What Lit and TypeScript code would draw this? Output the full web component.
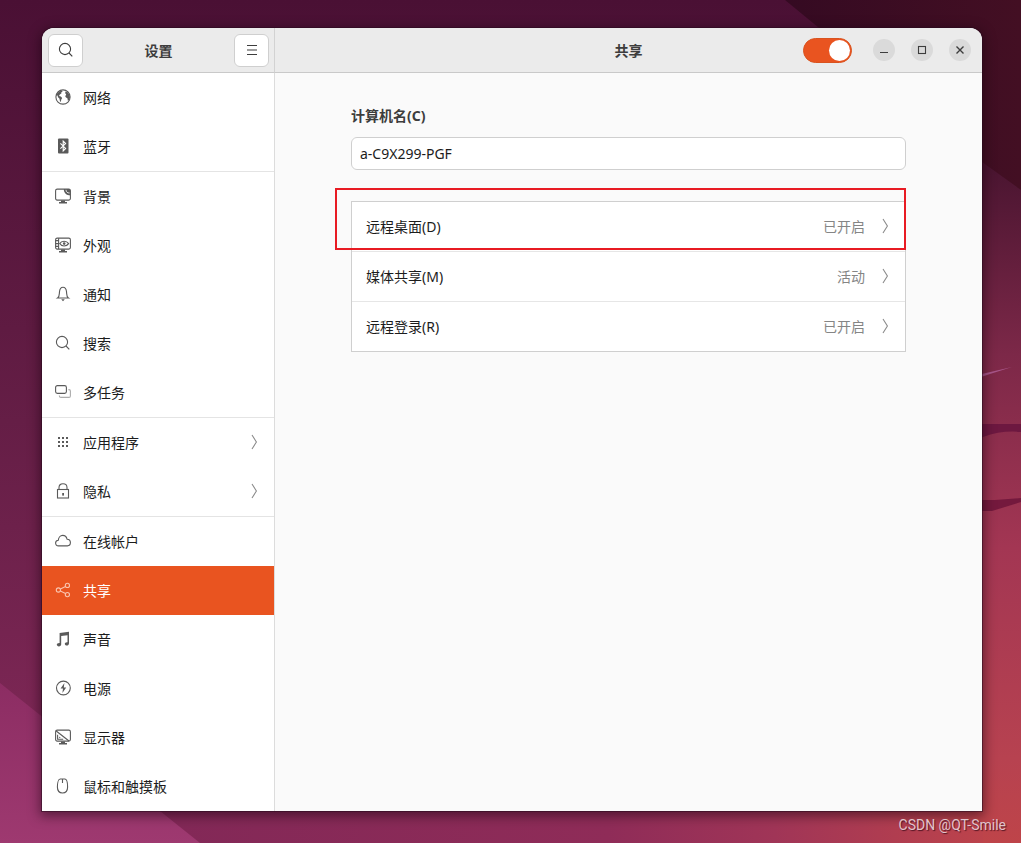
import { LitElement, html, css, svg, TemplateResult } from "lit";
import { customElement, property, state } from "lit/decorators.js";
import { classMap } from "lit/directives/class-map.js";

const ICONS: Record<string, TemplateResult> = {
  network: svg`<circle cx="8" cy="8" r="7.1" class="line"/><path class="solid" d="M4.2 2.4 6.8 1.4 7.6 2.4 6.2 3.6 6.4 4.6 4.8 5.6 4 7 5.8 7.6 7.2 9 6.2 10.8 5.8 13 5 12.2 4.4 9.6 3 8.2 2.6 6.4 1.2 6.6 2 4.4zM10.4 2.4 12.4 3 14.4 5.4 15 8.4 14 11.2 12.9 11.8 12.4 9.2 11 8.6 10.2 7.2 11.2 5.4 10.2 4.2z"/>`,
  bluetooth: svg`<rect x="3" y="0.5" width="10.5" height="15" rx="1" class="solid"/><path class="knock" d="M5.4 5.4 10.6 10.4 8.2 12.8V3.2L10.6 5.6 5.4 10.6"/>`,
  background: svg`<rect x="0.6" y="1.1" width="14.8" height="11" rx="1.6" class="line"/><path class="solid" d="M8.8 1H14.5L15.5 2.5V7.4C11.5 7.4 8.8 5 8.8 1zM6 12.4H10V14H12V15.4H4V14H6z"/><path class="glint" d="M11 1.8C11 4 12.4 5 14.6 5"/>`,
  appearance: svg`<rect x="0.6" y="1.1" width="14.8" height="11" rx="1.6" class="line"/><path class="line" d="M3.6 1.2V12M0.6 3.6H3.6M0.6 6.6H3.6M0.6 9.4H3.6M4.8 6.6C6.4 3.4 11.6 3.4 13.6 6.6 11.6 9.8 6.4 9.8 4.8 6.6z"/><circle cx="9.2" cy="6.6" r="1.3" class="solid"/><path class="solid" d="M6 12.4H10V14H12V15.4H4V14H6z"/>`,
  bell: svg`<path class="line" d="M2.6 12C4.6 10.8 4.2 8.4 4.5 5.6 4.8 2.8 6.2 1.3 8 1.3S11.2 2.8 11.5 5.6C11.8 8.4 11.4 10.8 13.4 12z"/><path class="solid" d="M6.2 13.2H9.8L8 15.2z"/>`,
  search: svg`<circle cx="7" cy="7" r="5.6" class="line"/><path class="line" d="M11 11 14.3 14.3"/>`,
  multitask: svg`<rect x="0.6" y="1.6" width="10.8" height="7.8" rx="1.8" class="line"/><path class="line faint" d="M13.4 5.6H14C15 5.6 15.4 6.2 15.4 7V12C15.4 13 14.8 13.4 14 13.4H6C5 13.4 4.4 13 4.4 12V11.4"/>`,
  apps: svg`<path class="solid" d="M3 3h2v2H3zM7 3h2v2H7zM11 3h2v2H11zM3 7h2v2H3zM7 7h2v2H7zM11 7h2v2H11zM3 11h2v2H3zM7 11h2v2H7zM11 11h2v2H11z"/>`,
  lock: svg`<rect x="2.5" y="6.5" width="11" height="8.5" class="line"/><path class="line" d="M4 6.4V4.6C4 2.2 5.6.8 8 .8S12 2.2 12 4.6V6.4"/><rect x="7.2" y="10" width="1.8" height="2.6" class="solid"/>`,
  cloud: svg`<path class="line" d="M3.5 12.9C1.6 12.9.6 11.6.6 10.1.6 8.6 1.7 7.4 3.3 7.2 3.5 4.6 5.3 2.4 7.7 2.4 9.8 2.4 11.5 3.9 12.1 6.2 14.2 6.3 15.4 7.8 15.4 9.6 15.4 11.5 14.2 12.9 12.4 12.9z"/>`,
  share: svg`<circle cx="3.4" cy="8" r="2.1" class="line"/><circle cx="12.4" cy="3.4" r="2.1" class="line"/><circle cx="12.4" cy="12.6" r="2.1" class="line"/><path class="line" d="M5.4 7 10.5 4.4M5.4 9 10.5 11.6"/>`,
  music: svg`<path class="solid" d="M4.6 1.9 14 .8V12.3C14 13.8 12.9 14.6 11.8 14.6S9.8 13.8 9.8 12.8 10.8 11 12.5 11.2V4.2L6.2 5V13.2C6.2 14.6 5.1 15.4 3.9 15.4S1.8 14.6 1.8 13.6 3 11.8 4.6 12z"/>`,
  power: svg`<circle cx="8.4" cy="8" r="6.9" class="line"/><path class="solid" d="M9.4 3 5.6 8.6H8L7.4 13 11.2 7.4H8.8z"/>`,
  display: svg`<rect x="0.6" y="1.1" width="14.8" height="11" rx="1.6" class="line"/><path class="line" d="M1.2 2 14 12M2.6 5.8V10.2H8.2"/><path class="solid" d="M4.2 7.4 5.8 9H4.2zM6 12.4H10V14H12V15.4H4V14H6z"/>`,
  mouse: svg`<path class="line" d="M5.2 1H9.8C11.8 1 12.6 5.8 12.6 9 12.6 12.6 10.6 15 7.5 15S2.4 12.6 2.4 9C2.4 5.8 3.2 1 5.2 1zM7.5 1.2V5"/>`,
  menu: svg`<path class="line" d="M3 3.5H13M3 8H13M3 12.5H13"/>`,
  minimize: svg`<path class="line" d="M4 10.5H12"/>`,
  maximize: svg`<rect x="4.5" y="4.5" width="7" height="7" class="line"/>`,
  close: svg`<path class="line bold" d="M4.5 4.5 11.5 11.5M11.5 4.5 4.5 11.5"/>`,
  chevron: svg`<path class="line" d="M6 1 10.4 8 6 15"/>`,
};

@customElement("ui-icon")
export class UiIcon extends LitElement {
  @property() name = "";

  static styles = css`
    :host { display: block; flex: none; width: 16px; height: 16px; }
    .glyph { display: block; width: 100%; height: 100%; }
    .line { fill: none; stroke: currentColor; stroke-width: 1.1; }
    .bold { stroke-width: 1.4; }
    .faint { opacity: 0.5; }
    .solid { fill: currentColor; }
    .knock { fill: none; stroke: #fff; stroke-width: 1.1; }
    .glint { fill: none; stroke: #fff; stroke-width: 0.8; }
  `;

  render() {
    return html`<svg class="glyph" viewBox="0 0 16 16" aria-hidden="true">${ICONS[this.name]}</svg>`;
  }
}

@customElement("desktop-wallpaper")
export class DesktopWallpaper extends LitElement {
  static styles = css`
    :host { display: block; }
    .art { display: block; width: 100%; height: 100%; }
  `;

  render() {
    return html`<svg class="art" viewBox="0 0 1021 843" preserveAspectRatio="none" aria-hidden="true">
      <defs>
        <linearGradient id="left" x1="0" y1="0" x2="0" y2="1">
          <stop offset="0" stop-color="#4a1034"/><stop offset="0.5" stop-color="#651e46"/><stop offset="1" stop-color="#852a5a"/>
        </linearGradient>
        <linearGradient id="right" x1="0" y1="0" x2="0" y2="1">
          <stop offset="0" stop-color="#45122f"/><stop offset="0.2" stop-color="#4b1531"/><stop offset="0.42" stop-color="#7c2848"/>
          <stop offset="0.65" stop-color="#a33653"/><stop offset="0.9" stop-color="#b74250"/><stop offset="1" stop-color="#be4449"/>
        </linearGradient>
        <linearGradient id="foot" x1="0" y1="0" x2="1" y2="0">
          <stop offset="0" stop-color="#822857"/><stop offset="0.55" stop-color="#8f2c58"/><stop offset="0.75" stop-color="#a03557"/><stop offset="1" stop-color="#bc434b"/>
        </linearGradient>
        <linearGradient id="fold" x1="0" y1="0" x2="0" y2="1">
          <stop offset="0" stop-color="#8c2d63"/><stop offset="1" stop-color="#9e3970"/>
        </linearGradient>
        <linearGradient id="corner" x1="0" y1="0" x2="1" y2="0">
          <stop offset="0" stop-color="#350a22"/><stop offset="1" stop-color="#430f23"/>
        </linearGradient>
      </defs>
      <rect width="1021" height="843" fill="url(#left)"/>
      <rect x="900" width="121" height="843" fill="url(#right)"/>
      <rect x="150" y="790" width="833" height="53" fill="url(#foot)"/>
      <path d="M785 0H1021V190L982 162z" fill="url(#corner)"/>
      <path d="M0 683 200 843H0z" fill="url(#fold)"/>
      <path d="M960 379 1012 367 990 374 960 384z" fill="#a8568a"/>
      <path d="M960 424H1021V432Q1002 430 983 437L960 443z" fill="#6d1840"/>
      <path d="M960 500H995L1021 498V502L992 511H960z" fill="#74193d"/>
    </svg>`;
  }
}

interface Panel { icon: string; label: string; sub?: boolean; }

const GROUPS: Panel[][] = [
  [{ icon: "network", label: "网络" }, { icon: "bluetooth", label: "蓝牙" }],
  [
    { icon: "background", label: "背景" },
    { icon: "appearance", label: "外观" },
    { icon: "bell", label: "通知" },
    { icon: "search", label: "搜索" },
    { icon: "multitask", label: "多任务" },
  ],
  [{ icon: "apps", label: "应用程序", sub: true }, { icon: "lock", label: "隐私", sub: true }],
  [
    { icon: "cloud", label: "在线帐户" },
    { icon: "share", label: "共享" },
    { icon: "music", label: "声音" },
    { icon: "power", label: "电源" },
    { icon: "display", label: "显示器" },
    { icon: "mouse", label: "鼠标和触摸板" },
  ],
];

const SERVICES = [
  { label: "远程桌面(D)", status: "已开启", marked: true },
  { label: "媒体共享(M)", status: "活动", marked: false },
  { label: "远程登录(R)", status: "已开启", marked: false },
];

@customElement("app-root")
export class AppRoot extends LitElement {
  @state() private selected = "共享";
  @state() private sharing = true;

  static styles = css`
    :host {
      display: block;
      font-family: "Noto Sans", "Noto Sans CJK SC", sans-serif;
      font-size: 14px;
      line-height: 20px;
      color: #1c1c1c;
    }
    * { box-sizing: border-box; }
    button, input { font: inherit; color: inherit; margin: 0; }
    button { padding: 0; border: 0; background: none; text-align: left; }
    .desktop {
      position: relative;
      isolation: isolate;
      display: flex;
      flex-direction: column;
      min-height: 100vh;
      padding: 28px 39px 0 42px;
    }
    .wallpaper { position: absolute; inset: 0; z-index: -1; }
    .window {
      flex: 1;
      display: grid;
      grid-template-columns: 233px minmax(0, 1fr);
      grid-template-rows: 45px 1fr;
      border-radius: 12px 12px 0 0;
      overflow: hidden;
      background: #fafafa;
      box-shadow: 0 0 0 1px rgba(40, 10, 30, 0.5), 0 3px 12px 2px rgba(20, 0, 12, 0.5);
    }
    .bar {
      display: grid;
      grid-template-columns: 1fr auto 1fr;
      align-items: center;
      background: #ebebeb;
      border-bottom: 1px solid #c9c9c9;
      color: #3d3d3d;
    }
    .side-bar { border-right: 1px solid #d2d2d2; padding: 0 5px 0 6px; }
    .main-bar { padding: 0 11px; }
    .title { margin: 0; padding-top: 2px; font-size: 14px; font-weight: 700; }
    .tool {
      display: grid;
      place-items: center;
      width: 35px;
      height: 33px;
      border: 1px solid #cfcfcf;
      border-radius: 6px;
      background: #fff;
    }
    .tool.end { justify-self: end; }
    .controls { display: flex; align-items: center; justify-content: flex-end; gap: 16px; }
    .switch {
      appearance: none;
      display: flex;
      justify-content: flex-end;
      width: 49px;
      height: 25px;
      margin-right: 5px;
      padding: 1px;
      border: 1px solid #d9531f;
      border-radius: 13px;
      background: #e95420;
    }
    .switch::before {
      content: "";
      width: 21px;
      height: 21px;
      border-radius: 50%;
      background: #fff;
    }
    .switch:not(:checked) { justify-content: flex-start; background: #cfcfcf; border-color: #bbb; }
    .round {
      display: grid;
      place-items: center;
      width: 22px;
      height: 22px;
      border-radius: 50%;
      background: #dadada;
    }
    .sidebar { background: #fff; border-right: 1px solid #dcdcdc; }
    .group + .group { border-top: 1px solid #e4e4e4; }
    .row {
      display: flex;
      align-items: center;
      gap: 12px;
      width: 100%;
      height: 49px;
      padding: 0 12px 2px 13px;
    }
    .row ui-icon { color: #5a5a5a; }
    .row .arrow, .service .arrow { color: #8b8b8b; }
    .name { flex: 1; padding-top: 2px; }
    .row.active { background: #e95420; color: #fff; }
    .row.active ui-icon { color: #f9c3ae; }
    .content { padding: 33px 16px; }
    .form { width: 100%; max-width: 555px; margin: 0 auto; }
    .label { display: block; font-weight: 700; color: #3d3d3d; }
    .entry {
      display: block;
      width: 100%;
      height: 33px;
      margin: 11px 0 31px;
      padding: 0 8px;
      border: 1px solid #cfcfcf;
      border-radius: 6px;
      background: #fff;
    }
    .services { margin: 0; padding: 0; list-style: none; border: 1px solid #cfcfcf; background: #fff; }
    .item { position: relative; }
    .item + .item { border-top: 1px solid #e6e6e6; }
    .service {
      display: flex;
      align-items: center;
      gap: 12px;
      width: 100%;
      height: 49px;
      padding: 0 12px 2px 14px;
    }
    .status { color: #858585; padding-top: 2px; }
    .mark {
      position: absolute;
      z-index: 1;
      inset: -14px -1px 1px -17px;
      border: 2px solid #e81b23;
      pointer-events: none;
    }
    .credit {
      margin: 0 -24px 0 0;
      padding: 4px 0 8px;
      text-align: right;
      font-family: Roboto, sans-serif;
      font-size: 14px;
      color: #e3c3cb;
      text-shadow: 1px 1px 1px rgba(60, 10, 25, 0.8);
    }
  `;

  private renderRow(p: Panel) {
    const active = p.label === this.selected;
    return html`<button class=${classMap({ row: true, active })} @click=${() => (this.selected = p.label)}>
      <ui-icon name=${p.icon}></ui-icon>
      <span class="name">${p.label}</span>
      ${p.sub ? html`<ui-icon class="arrow" name="chevron"></ui-icon>` : null}
    </button>`;
  }

  render() {
    return html`<div class="desktop">
      <desktop-wallpaper class="wallpaper"></desktop-wallpaper>
      <div class="window">
        <header class="bar side-bar">
          <button class="tool" aria-label="搜索"><ui-icon name="search"></ui-icon></button>
          <h1 class="title">设置</h1>
          <button class="tool end" aria-label="菜单"><ui-icon name="menu"></ui-icon></button>
        </header>
        <header class="bar main-bar">
          <span></span>
          <h2 class="title">共享</h2>
          <div class="controls">
            <input class="switch" type="checkbox" role="switch" aria-label="共享" .checked=${this.sharing}
              @change=${(e: Event) => (this.sharing = (e.target as HTMLInputElement).checked)}>
            <button class="round" aria-label="最小化"><ui-icon name="minimize"></ui-icon></button>
            <button class="round" aria-label="最大化"><ui-icon name="maximize"></ui-icon></button>
            <button class="round" aria-label="关闭"><ui-icon name="close"></ui-icon></button>
          </div>
        </header>
        <nav class="sidebar">
          ${GROUPS.map((g) => html`<div class="group">${g.map((p) => this.renderRow(p))}</div>`)}
        </nav>
        <main class="content">
          <div class="form">
            <label class="label" for="host">计算机名(C)</label>
            <input class="entry" id="host" type="text" value="a-C9X299-PGF">
            <ul class="services">
              ${SERVICES.map((s) => html`<li class="item">
                <button class="service">
                  <span class="name">${s.label}</span>
                  <span class="status">${s.status}</span>
                  <ui-icon class="arrow" name="chevron"></ui-icon>
                </button>
                ${s.marked ? html`<span class="mark"></span>` : null}
              </li>`)}
            </ul>
          </div>
        </main>
      </div>
      <p class="credit">CSDN @QT-Smile</p>
    </div>`;
  }
}
